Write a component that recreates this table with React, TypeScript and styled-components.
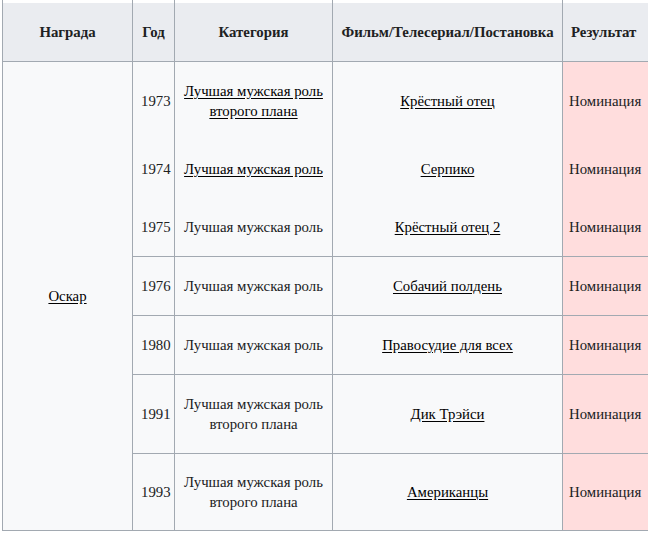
import { FunctionComponent } from "react";
import styled, { createGlobalStyle } from "styled-components";

const serifStack = `"Liberation Serif", "Tinos", "Times New Roman", serif`;

const GlobalStyle = createGlobalStyle`
    html, body {
        margin: 0;
        padding: 0;
        background: #ffffff;
    }
    body {
        font-family: ${serifStack};
        font-size: 14.8px;
        color: #202122;
    }
`;

const Page = styled.div`
    width: 648px;
    height: 533px;
    overflow: hidden;
    padding-left: 2px;
    box-sizing: border-box;
`;

const Table = styled.table`
    border-collapse: collapse;
    table-layout: fixed;
    width: 690px;
    background: #f8f9fa;
    border: 1px solid #a2a9b1;
    border-top: none;
    font-family: ${serifStack};
    font-size: 14.8px;
`;

const HeadCell = styled.th<{ $left?: boolean }>`
    background: #eaecf0;
    border: 1px solid #a2a9b1;
    border-top: none;
    box-shadow: inset 0 3px 0 #ffffff;
    height: 58px;
    padding: 3px 8px 0;
    font-family: ${serifStack};
    font-size: 14.8px;
    font-weight: 700;
    text-align: ${(p) => (p.$left ? "left" : "center")};
    line-height: 20px;
    color: #202122;
`;

const Cell = styled.td<{ $nom?: boolean; $open?: boolean; $last?: boolean }>`
    border-left: 1px solid #a2a9b1;
    border-right: 1px solid #a2a9b1;
    border-bottom: ${(p) => (p.$open ? "none" : "1px solid #a2a9b1")};
    background: ${(p) => (p.$nom ? "#ffdddd" : "#f8f9fa")};
    padding: ${(p) => (p.$last ? "18px" : "19px")} 8px;
    padding-left: ${(p) => (p.$nom ? "6px" : "8px")};
    font-family: ${serifStack};
    font-size: 14.8px;
    text-align: ${(p) => (p.$nom ? "left" : "center")};
    vertical-align: middle;
    line-height: 20px;
    color: #202122;
`;

const Link = styled.a`
    color: #000000;
    text-decoration: underline;
    text-underline-offset: 2px;
`;

interface Row {
    year: string;
    category: string;
    categoryLink: boolean;
    work: string;
    open: boolean;
}

const rows: Row[] = [
    { year: "1973", category: "Лучшая мужская роль второго плана", categoryLink: true, work: "Крёстный отец", open: true },
    { year: "1974", category: "Лучшая мужская роль", categoryLink: true, work: "Серпико", open: true },
    { year: "1975", category: "Лучшая мужская роль", categoryLink: false, work: "Крёстный отец 2", open: false },
    { year: "1976", category: "Лучшая мужская роль", categoryLink: false, work: "Собачий полдень", open: false },
    { year: "1980", category: "Лучшая мужская роль", categoryLink: false, work: "Правосудие для всех", open: false },
    { year: "1991", category: "Лучшая мужская роль второго плана", categoryLink: false, work: "Дик Трэйси", open: false },
    { year: "1993", category: "Лучшая мужская роль второго плана", categoryLink: false, work: "Американцы", open: false },
];

const splitCategory = (text: string) => {
    const idx = text.indexOf(" второго");
    if (idx < 0) return <>{text}</>;
    return (
        <>
            {text.slice(0, idx)}
            <br />
            {text.slice(idx + 1)}
        </>
    );
};

const App: FunctionComponent = () => {
    return (
        <Page>
            <GlobalStyle />
            <Table>
                <colgroup>
                    <col style={{ width: 130 }} />
                    <col style={{ width: 42 }} />
                    <col style={{ width: 158 }} />
                    <col style={{ width: 230 }} />
                    <col style={{ width: 130 }} />
                </colgroup>
                <thead>
                    <tr>
                        <HeadCell>Награда</HeadCell>
                        <HeadCell>Год</HeadCell>
                        <HeadCell>Категория</HeadCell>
                        <HeadCell>Фильм/Телесериал/Постановка</HeadCell>
                        <HeadCell $left>Результат</HeadCell>
                    </tr>
                </thead>
                <tbody>
                    {rows.map((row, i) => {
                        const last = i === rows.length - 1;
                        return (
                            <tr key={row.year}>
                                {i === 0 && (
                                    <Cell rowSpan={rows.length}>
                                        <Link href="#">Оскар</Link>
                                    </Cell>
                                )}
                                <Cell $open={row.open} $last={last}>
                                    {row.year}
                                </Cell>
                                <Cell $open={row.open} $last={last}>
                                    {row.categoryLink ? (
                                        <Link href="#">{splitCategory(row.category)}</Link>
                                    ) : (
                                        splitCategory(row.category)
                                    )}
                                </Cell>
                                <Cell $open={row.open} $last={last}>
                                    <Link href="#">{row.work}</Link>
                                </Cell>
                                <Cell $nom $open={row.open} $last={last}>
                                    Номинация
                                </Cell>
                            </tr>
                        );
                    })}
                </tbody>
            </Table>
        </Page>
    );
};

export default App;
